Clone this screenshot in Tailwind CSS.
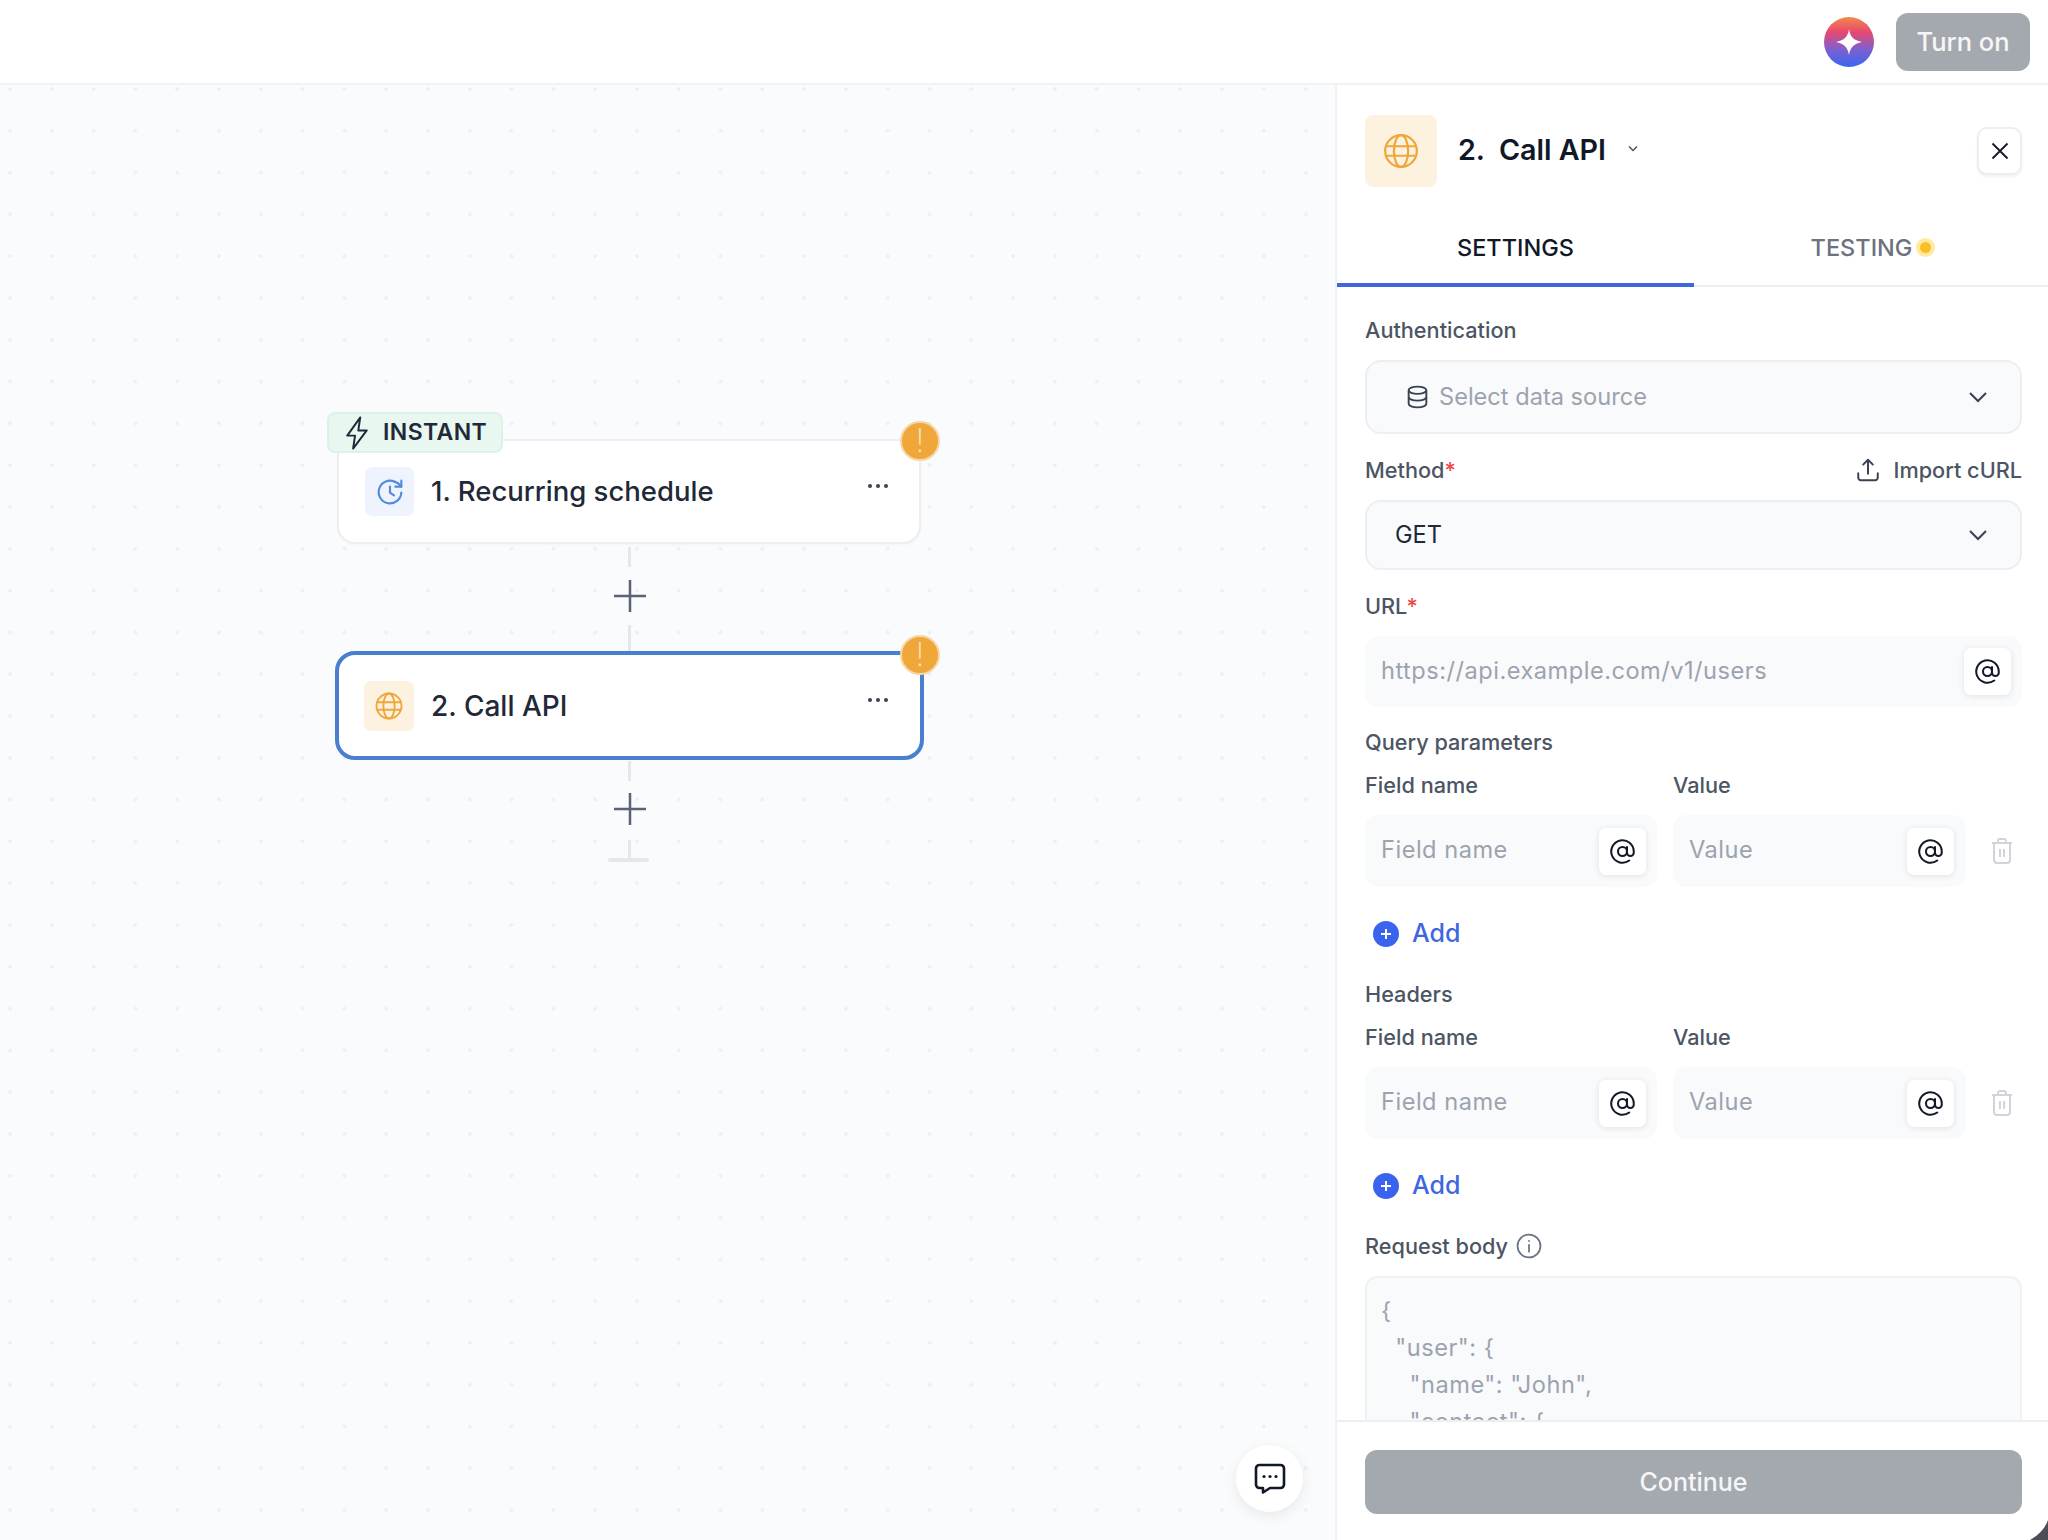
<!DOCTYPE html>
<html lang="en">
<head>
<meta charset="UTF-8">
<title>Call API</title>
<script src="https://cdn.jsdelivr.net/npm/@tailwindcss/browser@4"></script>
</head>
<body class="bg-white font-['Inter',sans-serif] text-[#1f2937]">
<div class="w-[2048px] h-[1540px] overflow-hidden flex flex-col relative">

  <!-- top bar -->
  <header class="h-[85px] shrink-0 bg-white border-b-2 border-[#f1f2f4] flex items-center justify-end pr-[18px] gap-[22px]">
    <div class="w-[50px] h-[50px] rounded-full bg-[linear-gradient(180deg,#f28a4a_0%,#e9486f_30%,#7d5fd0_65%,#3568f2_100%)] flex items-center justify-center">
      <svg width="30" height="30" viewBox="0 0 24 24" fill="#fff"><path d="M12 1.500c.9 6 3.500 9 10.500 10.500-7 1.500-9.600 4.500-10.500 10.500-.9-6-3.500-9-10.500-10.500 7-1.500 9.600-4.500 10.500-10.500z"/></svg>
    </div>
    <div class="w-[134px] h-[58px] pt-[2px] rounded-[12px] bg-[#a4a8af] text-white/90 text-[25.500px] font-medium flex items-center justify-center">Turn on</div>
  </header>

  <div class="flex-1 flex min-h-0">
    <!-- canvas -->
    <main class="flex-1 relative bg-[#fafbfd] bg-[radial-gradient(circle,#eef0f3_1.6px,transparent_1.8px)] bg-[size:41.8px_41.8px] bg-[position:-10.9px_-16.9px]">

      <!-- node 1 -->
      <div class="absolute left-[337px] top-[354px] w-[584px] h-[105px] rounded-[18px] bg-white border-2 border-[#eceef1] shadow-[0_1px_3px_rgba(0,0,0,0.03)]">
        <div class="absolute left-[26px] top-[26px] w-[49px] h-[49px] rounded-[7px] bg-[#eef3fd] flex items-center justify-center">
          <svg width="32" height="32" viewBox="0 0 24 24" fill="none" stroke="#4f8be0" stroke-width="1.600" stroke-linecap="round" stroke-linejoin="round"><path d="M20.500 12.500a8.500 8.500 0 1 1-5-8.200"/><path d="M20.500 3.500v4.500h-4.500"/><path d="M20.500 8a8.400 8.400 0 0 0-5-3.700"/><path d="M12 8v4.500l3 2"/></svg>
        </div>
        <div class="absolute left-[92px] top-[31px] text-[27.500px] leading-[38px] font-medium text-[#1f2937] whitespace-nowrap">1. Recurring schedule</div>
        <div class="absolute left-[529px] top-[43px] flex gap-[4px]"><span class="w-[4px] h-[4px] rounded-full bg-[#374151]"></span><span class="w-[4px] h-[4px] rounded-full bg-[#374151]"></span><span class="w-[4px] h-[4px] rounded-full bg-[#374151]"></span></div>
      </div>
      <div class="absolute left-[327px] top-[327px] w-[176px] h-[41px] rounded-[8px] bg-[#e9f7f1] border-2 border-[#dcf1e8] flex items-center pl-[15px] gap-[13px]">
        <svg width="26" height="34" viewBox="0 0 20 26" fill="none" stroke="#1f2937" stroke-width="1.500" stroke-linejoin="round"><path d="M12.500 1 2.500 15h6l-1.500 10L17.500 11h-6.500z"/></svg>
        <span class="text-[23px] tracking-[0.4px] leading-none font-semibold text-[#1f2937]">INSTANT</span>
      </div>
      <div class="absolute left-[900px] top-[336px] w-[40px] h-[40px] rounded-full bg-[#efa73a] border-2 border-[#f7d7a3] flex items-center justify-center text-[#fbe3ba] text-[32px] font-extralight leading-none">!</div>

      <div class="absolute left-[628px] top-[462px] w-[3px] h-[20px] bg-[#e5e7eb]"></div>
      <svg class="absolute left-[614px] top-[495px]" width="32" height="32" viewBox="0 0 32 32" stroke="#5b6178" stroke-width="2.500"><path d="M16 0v32M0 16h32"/></svg>
      <div class="absolute left-[628px] top-[540px] w-[3px] h-[26px] bg-[#e5e7eb]"></div>

      <!-- node 2 -->
      <div class="absolute left-[335px] top-[566px] w-[589px] h-[109px] rounded-[20px] bg-white border-[4px] border-[#4a7fd0]">
        <div class="absolute left-[25px] top-[26px] w-[50px] h-[50px] rounded-[7px] bg-[#fdf1e0] flex items-center justify-center">
          <svg width="30" height="30" viewBox="0 0 24 24" fill="none" stroke="#efa73a" stroke-width="1.500"><circle cx="12" cy="12" r="10"/><ellipse cx="12" cy="12" rx="4.500" ry="10"/><path d="M2.500 9h19M2.500 15h19"/></svg>
        </div>
        <div class="absolute left-[92px] top-[32px] text-[28px] leading-[38px] font-medium text-[#1f2937] whitespace-nowrap">2. Call API</div>
        <div class="absolute left-[529px] top-[43px] flex gap-[4px]"><span class="w-[4px] h-[4px] rounded-full bg-[#374151]"></span><span class="w-[4px] h-[4px] rounded-full bg-[#374151]"></span><span class="w-[4px] h-[4px] rounded-full bg-[#374151]"></span></div>
      </div>
      <div class="absolute left-[900px] top-[550px] w-[40px] h-[40px] rounded-full bg-[#efa73a] border-2 border-[#f7d7a3] flex items-center justify-center text-[#fbe3ba] text-[32px] font-extralight leading-none">!</div>

      <div class="absolute left-[628px] top-[676px] w-[3px] h-[20px] bg-[#e5e7eb]"></div>
      <svg class="absolute left-[614px] top-[708px]" width="32" height="32" viewBox="0 0 32 32" stroke="#5b6178" stroke-width="2.500"><path d="M16 0v32M0 16h32"/></svg>
      <div class="absolute left-[628px] top-[755px] w-[3px] h-[19px] bg-[#e5e7eb]"></div>
      <div class="absolute left-[608px] top-[773px] w-[41px] h-[4px] rounded-sm bg-[#e5e7eb]"></div>

      <!-- chat -->
      <div class="absolute left-[1236px] top-[1360px] w-[67px] h-[67px] rounded-full bg-white shadow-[0_4px_14px_rgba(0,0,0,0.08)] flex items-center justify-center">
        <svg width="32" height="32" viewBox="0 0 32 32" fill="none" stroke="#111827" stroke-width="2.600" stroke-linejoin="round"><path d="M5.500 2h21a3.500 3.500 0 0 1 3.500 3.500v16a3.500 3.500 0 0 1-3.500 3.500H16l-7 4.500V25H5.500A3.500 3.500 0 0 1 2 21.500v-16A3.500 3.500 0 0 1 5.500 2z"/><circle cx="10" cy="13.500" r="1.600" fill="#111827" stroke="none"/><circle cx="16" cy="13.500" r="1.600" fill="#111827" stroke="none"/><circle cx="22" cy="13.500" r="1.600" fill="#111827" stroke="none"/></svg>
      </div>
    </main>

    <!-- side panel -->
    <aside class="w-[713px] shrink-0 bg-white border-l-2 border-[#f1f2f5] flex flex-col min-h-0">
      <div class="h-[125px] shrink-0 pl-[28px] pr-[26px] pt-[30px] flex items-start">
        <div class="w-[72px] h-[72px] rounded-[8px] bg-[#fdf1e0] flex items-center justify-center">
          <svg width="38" height="38" viewBox="0 0 24 24" fill="none" stroke="#efa73a" stroke-width="1.400"><circle cx="12" cy="12" r="10"/><ellipse cx="12" cy="12" rx="4.500" ry="10"/><path d="M2.500 9h19M2.500 15h19"/></svg>
        </div>
        <div class="ml-[21px] mt-[16px] text-[28.700px] leading-[38px] font-semibold text-[#111827] whitespace-pre">2.  Call API</div>
        <svg class="ml-[21px] mt-[30px]" width="12" height="8" viewBox="0 0 12 8" fill="none" stroke="#4b5563" stroke-width="1.500"><path d="M2 1.500l4 4 4-4"/></svg>
        <div class="ml-auto mt-[12px] w-[45px] h-[48px] rounded-[10px] bg-white border-2 border-[#eceef1] shadow-[0_2px_3px_rgba(0,0,0,0.06)] flex items-center justify-center">
          <svg width="20" height="20" viewBox="0 0 20 20" stroke="#111827" stroke-width="1.800"><path d="M2.500 2.500l15 15M17.500 2.500l-15 15"/></svg>
        </div>
      </div>

      <div class="h-[77px] shrink-0 flex border-b-2 border-[#eceef1]">
        <div class="w-[357px] h-[77px] pt-[2px] border-b-4 border-[#3f66e0] flex items-center justify-center text-[23.500px] font-medium text-[#111827]">SETTINGS</div>
        <div class="flex-1 flex items-center justify-center gap-[8px] text-[23.500px] font-medium text-[#6b7280]">TESTING<span class="w-[11px] h-[11px] rounded-full bg-[#fbbf24] ring-[4px] ring-[#fde68a]/80"></span></div>
      </div>

      <div class="flex-1 min-h-0 overflow-hidden pl-[28px] pr-[26px] pt-[30px]">
        <div class="h-[28px] pb-[2px] flex items-center text-[21.700px] font-medium text-[#4b5563]">Authentication</div>
        <div class="mt-[15px] h-[74px] rounded-[16px] bg-[#f9fafb] border-2 border-[#eceef1] flex items-center pl-[38px] pr-[32px] text-[23.600px] text-[#9ca3af]">
          <svg class="mr-[9px]" width="25" height="26" viewBox="0 0 24 24" fill="none" stroke="#374151" stroke-width="1.800"><ellipse cx="12" cy="5.500" rx="8.500" ry="3.500"/><path d="M3.500 5.500v13c0 1.900 3.800 3.500 8.500 3.500s8.500-1.600 8.500-3.500v-13"/><path d="M3.500 12c0 1.900 3.800 3.500 8.500 3.500s8.500-1.600 8.500-3.500"/></svg>
          Select data source
          <svg class="ml-auto" width="20" height="12" viewBox="0 0 20 12" fill="none" stroke="#374151" stroke-width="2"><path d="M2 2l8 8 8-8"/></svg>
        </div>

        <div class="mt-[22px] h-[28px] flex items-center text-[21.700px] font-medium text-[#4b5563]">
          <span>Method<span class="text-[#ef4444]">*</span></span>
          <svg class="ml-auto mr-[13px]" width="26" height="26" viewBox="0 0 24 24" fill="none" stroke="#374151" stroke-width="1.800" stroke-linecap="round" stroke-linejoin="round"><path d="M3 15v4a2.500 2.500 0 0 0 2.500 2.500h13A2.500 2.500 0 0 0 21 19v-4"/><path d="M12 15.500V2.500M7.500 7 12 2.500 16.500 7"/></svg>
          <span>Import cURL</span>
        </div>
        <div class="mt-[16px] h-[70px] rounded-[16px] bg-[#f9fafb] border-2 border-[#eceef1] flex items-center pl-[28px] pr-[32px] text-[23.600px] text-[#1f2937]">
          GET
          <svg class="ml-auto" width="20" height="12" viewBox="0 0 20 12" fill="none" stroke="#374151" stroke-width="2"><path d="M2 2l8 8 8-8"/></svg>
        </div>

        <div class="mt-[23px] h-[28px] pb-[2px] flex items-center text-[21.700px] font-medium text-[#4b5563]"><span>URL<span class="text-[#ef4444]">*</span></span></div>
        <div class="mt-[15px] h-[71px] rounded-[14px] bg-[#f9fafb] flex items-center pl-[16px] pr-[11px] text-[23.600px] tracking-[0.5px] text-[#9ca3af]">
          <span class="mb-[2px]">https://api.example.com/v1/users</span>
          <div class="ml-auto w-[47px] h-[47px] rounded-[7px] bg-white shadow-[0_1px_6px_rgba(0,0,0,0.10)] flex items-center justify-center">
            <svg width="27" height="27" viewBox="0 0 24 24" fill="none" stroke="#111827" stroke-width="1.800" stroke-linecap="round"><circle cx="12" cy="12" r="4"/><path d="M16 8v5a3 3 0 0 0 6 0v-1a10 10 0 1 0-4 8"/></svg>
          </div>
        </div>

        <div class="mt-[22px] h-[28px] pb-[2px] flex items-center text-[21.700px] font-medium text-[#4b5563]">Query parameters</div>
        <div class="mt-[15px] h-[28px] pb-[2px] flex text-[21.700px] font-medium text-[#4b5563]">
          <div class="w-[308px] flex items-center">Field name</div><div class="flex items-center">Value</div>
        </div>
        <div class="mt-[15px] h-[72px] flex items-center">
          <div class="w-[292px] h-[72px] rounded-[14px] bg-[#f9fafb] flex items-center pl-[16px] pr-[11px] text-[23.600px] tracking-[0.5px] text-[#9ca3af]">
            <span class="mb-[2px]">Field name</span>
            <div class="ml-auto w-[47px] h-[47px] rounded-[7px] bg-white shadow-[0_1px_6px_rgba(0,0,0,0.10)] flex items-center justify-center">
              <svg width="27" height="27" viewBox="0 0 24 24" fill="none" stroke="#111827" stroke-width="1.800" stroke-linecap="round"><circle cx="12" cy="12" r="4"/><path d="M16 8v5a3 3 0 0 0 6 0v-1a10 10 0 1 0-4 8"/></svg>
            </div>
          </div>
          <div class="ml-[16px] w-[293px] h-[72px] rounded-[14px] bg-[#f9fafb] flex items-center pl-[16px] pr-[12px] text-[23.600px] tracking-[0.5px] text-[#9ca3af]">
            <span class="mb-[2px]">Value</span>
            <div class="ml-auto w-[47px] h-[47px] rounded-[7px] bg-white shadow-[0_1px_6px_rgba(0,0,0,0.10)] flex items-center justify-center">
              <svg width="27" height="27" viewBox="0 0 24 24" fill="none" stroke="#111827" stroke-width="1.800" stroke-linecap="round"><circle cx="12" cy="12" r="4"/><path d="M16 8v5a3 3 0 0 0 6 0v-1a10 10 0 1 0-4 8"/></svg>
            </div>
          </div>
          <svg class="ml-[24px]" width="24" height="28" viewBox="0 0 24 28" fill="none" stroke="#d1d5db" stroke-width="2" stroke-linejoin="round"><path d="M2 6h20M8 6V4a2 2 0 0 1 2-2h4a2 2 0 0 1 2 2v2M4 6v17a3 3 0 0 0 3 3h10a3 3 0 0 0 3-3V6M10 12v8M14 12v8"/></svg>
        </div>
        <div class="mt-[27px] h-[40px] flex items-center pl-[8px] gap-[13px] text-[25px] font-medium text-[#3f66e0]">
          <span class="w-[26px] h-[26px] rounded-full bg-[#3b64ee] flex items-center justify-center">
            <svg width="14" height="14" viewBox="0 0 14 14" stroke="#fff" stroke-width="2"><path d="M7 2v10M2 7h10"/></svg>
          </span>Add
        </div>

        <div class="mt-[27px] h-[28px] pb-[2px] flex items-center text-[21.700px] font-medium text-[#4b5563]">Headers</div>
        <div class="mt-[15px] h-[28px] pb-[2px] flex text-[21.700px] font-medium text-[#4b5563]">
          <div class="w-[308px] flex items-center">Field name</div><div class="flex items-center">Value</div>
        </div>
        <div class="mt-[15px] h-[72px] flex items-center">
          <div class="w-[292px] h-[72px] rounded-[14px] bg-[#f9fafb] flex items-center pl-[16px] pr-[11px] text-[23.600px] tracking-[0.5px] text-[#9ca3af]">
            <span class="mb-[2px]">Field name</span>
            <div class="ml-auto w-[47px] h-[47px] rounded-[7px] bg-white shadow-[0_1px_6px_rgba(0,0,0,0.10)] flex items-center justify-center">
              <svg width="27" height="27" viewBox="0 0 24 24" fill="none" stroke="#111827" stroke-width="1.800" stroke-linecap="round"><circle cx="12" cy="12" r="4"/><path d="M16 8v5a3 3 0 0 0 6 0v-1a10 10 0 1 0-4 8"/></svg>
            </div>
          </div>
          <div class="ml-[16px] w-[293px] h-[72px] rounded-[14px] bg-[#f9fafb] flex items-center pl-[16px] pr-[12px] text-[23.600px] tracking-[0.5px] text-[#9ca3af]">
            <span class="mb-[2px]">Value</span>
            <div class="ml-auto w-[47px] h-[47px] rounded-[7px] bg-white shadow-[0_1px_6px_rgba(0,0,0,0.10)] flex items-center justify-center">
              <svg width="27" height="27" viewBox="0 0 24 24" fill="none" stroke="#111827" stroke-width="1.800" stroke-linecap="round"><circle cx="12" cy="12" r="4"/><path d="M16 8v5a3 3 0 0 0 6 0v-1a10 10 0 1 0-4 8"/></svg>
            </div>
          </div>
          <svg class="ml-[24px]" width="24" height="28" viewBox="0 0 24 28" fill="none" stroke="#d1d5db" stroke-width="2" stroke-linejoin="round"><path d="M2 6h20M8 6V4a2 2 0 0 1 2-2h4a2 2 0 0 1 2 2v2M4 6v17a3 3 0 0 0 3 3h10a3 3 0 0 0 3-3V6M10 12v8M14 12v8"/></svg>
        </div>
        <div class="mt-[27px] h-[40px] flex items-center pl-[8px] gap-[13px] text-[25px] font-medium text-[#3f66e0]">
          <span class="w-[26px] h-[26px] rounded-full bg-[#3b64ee] flex items-center justify-center">
            <svg width="14" height="14" viewBox="0 0 14 14" stroke="#fff" stroke-width="2"><path d="M7 2v10M2 7h10"/></svg>
          </span>Add
        </div>

        <div class="mt-[27px] h-[28px] pb-[2px] flex items-center gap-[8px] text-[21.700px] font-medium text-[#4b5563]">
          Request body
          <svg width="26" height="26" viewBox="0 0 25 25" fill="none" stroke="#6b7280" stroke-width="1.700" stroke-linecap="round"><circle cx="12.500" cy="12.500" r="11"/><path d="M12.500 11.500v6.500M12.500 7.500v.2"/></svg>
        </div>
        <pre class="mt-[15px] h-[160px] rounded-[12px] bg-[#f9fafb] border-2 border-[#f0f1f3] pl-[14px] pt-[14px] font-['Inter',sans-serif] text-[23.600px] tracking-[0.5px] leading-[37px] text-[#9ca3af]">{
  "user": {
    "name": "John",
    "contact": {</pre>
      </div>

      <div class="h-[120px] shrink-0 bg-white border-t-2 border-[#eceef1] pl-[28px] pr-[26px] pt-[28px]">
        <div class="h-[64px] pt-[2px] rounded-[12px] bg-[#a4a8af] flex items-center justify-center text-[25px] font-medium text-white/90">Continue</div>
      </div>
    </aside>
  </div>

  <svg class="absolute right-0 bottom-0" width="18" height="20" viewBox="0 0 18 20"><path d="M18 0Q14 12 0 20H18z" fill="#4b4f55"/></svg>
</div>
</body>
</html>
